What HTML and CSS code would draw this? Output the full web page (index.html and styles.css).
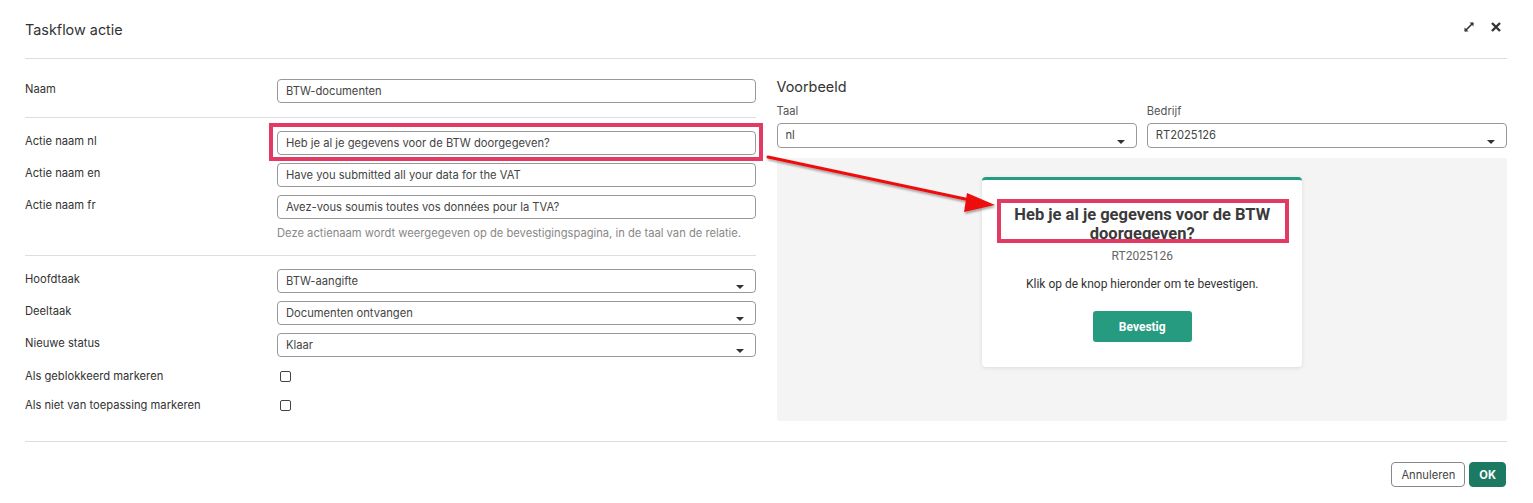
FILE: index.html
```html
<!DOCTYPE html>
<html lang="nl">
<head>
  <meta charset="UTF-8" />
  <meta name="viewport" content="width=device-width, initial-scale=1.0" />
  <title>Taskflow actie</title>
  <link rel="stylesheet" href="styles.css">
</head>
<body>
  <div class="modal">
    <header class="modal-header">
      <h1>Taskflow actie</h1>
      <div class="header-icons">
        <svg class="icon" width="12" height="12" viewBox="0 0 12 12">
          <path d="M2 10 L10 2" stroke="#333" stroke-width="1.6"/>
          <path d="M6.5 1.5 H10.5 V5.5 Z" fill="#333"/>
          <path d="M1.5 6.5 V10.5 H5.5 Z" fill="#333"/>
        </svg>
        <svg class="icon" width="12" height="12" viewBox="0 0 12 12">
          <path d="M2 2 L10 10 M10 2 L2 10" stroke="#333" stroke-width="2.4"/>
        </svg>
      </div>
    </header>

    <div class="modal-body">
      <div class="form-col">
        <div class="form-row">
          <label>Naam</label>
          <div class="input">BTW-documenten</div>
        </div>
        <hr class="sep">

        <div class="form-group">
          <div class="form-row">
            <label>Actie naam nl</label>
            <div class="input highlight">Heb je al je gegevens voor de BTW doorgegeven?</div>
          </div>
          <div class="form-row">
            <label>Actie naam en</label>
            <div class="input">Have you submitted all your data for the VAT</div>
          </div>
          <div class="form-row">
            <label>Actie naam fr</label>
            <div class="input">Avez-vous soumis toutes vos données pour la TVA?</div>
          </div>
        </div>
        <p class="hint">Deze actienaam wordt weergegeven op de bevestigingspagina, in de taal van de relatie.</p>
        <hr class="sep">

        <div class="form-group">
          <div class="form-row">
            <label>Hoofdtaak</label>
            <div class="input select"><span>BTW-aangifte</span><i class="caret"></i></div>
          </div>
          <div class="form-row">
            <label>Deeltaak</label>
            <div class="input select"><span>Documenten ontvangen</span><i class="caret"></i></div>
          </div>
          <div class="form-row">
            <label>Nieuwe status</label>
            <div class="input select"><span>Klaar</span><i class="caret"></i></div>
          </div>
          <div class="form-row check-row">
            <label>Als geblokkeerd markeren</label>
            <span class="checkbox"></span>
          </div>
          <div class="form-row check-row">
            <label>Als niet van toepassing markeren</label>
            <span class="checkbox"></span>
          </div>
        </div>
      </div>

      <div class="preview-col">
        <h2>Voorbeeld</h2>
        <div class="preview-filters">
          <div class="filter">
            <label>Taal</label>
            <div class="input select"><span>nl</span><i class="caret"></i></div>
          </div>
          <div class="filter">
            <label>Bedrijf</label>
            <div class="input select"><span>RT2025126</span><i class="caret"></i></div>
          </div>
        </div>
        <div class="preview-panel">
          <div class="confirm-card">
            <h3 class="card-title">Heb je al je gegevens voor de BTW doorgegeven?</h3>
            <div class="card-company">RT2025126</div>
            <p class="card-text">Klik op de knop hieronder om te bevestigen.</p>
            <button class="btn-confirm">Bevestig</button>
          </div>
        </div>
      </div>
    </div>

    <footer class="modal-footer">
      <button class="btn btn-outline">Annuleren</button>
      <button class="btn btn-primary">OK</button>
    </footer>

    <!-- annotation arrow -->
    <svg class="arrow" width="1533" height="503" viewBox="0 0 1533 503">
      <defs>
        <filter id="shadow" x="-10%" y="-50%" width="120%" height="200%">
          <feDropShadow dx="1" dy="2" stdDeviation="1.2" flood-color="#000" flood-opacity="0.35"/>
        </filter>
      </defs>
      <g filter="url(#shadow)">
        <path d="M768 157 L970 200" stroke="#ee1111" stroke-width="3" stroke-linecap="round"/>
        <path d="M995 205 L967 193 L964 212 Z" fill="#ee1111"/>
      </g>
    </svg>
  </div>
</body>
</html>
```

FILE: styles.css
```css
body {
  margin: 0;
  padding: 0;
  background-color: #fff;
  font-family: Inter, "Noto Sans", sans-serif;
  color: #333;
}
.modal {
  position: relative;
  width: 1533px;
  height: 503px;
  padding: 0 26px 0 25px;
  box-sizing: border-box;
}
.modal-header {
  height: 58px;
  border-bottom: 1px solid #ddd;
  display: flex;
  align-items: center;
  justify-content: space-between;
}
.modal-header h1 {
  margin: 0;
  font-size: 14.4px;
  font-weight: 400;
  color: #333;
}
.header-icons {
  display: flex;
  gap: 15px;
  align-items: center;
  margin-right: 5px;
  margin-top: -4px;
}
.modal-body {
  display: grid;
  grid-template-columns: 1fr 1fr;
  gap: 21px;
  padding: 20px 0 20px;
  border-bottom: 1px solid #ddd;
}
.form-group {
  display: flex;
  flex-direction: column;
  gap: 8px;
}
.form-row {
  display: grid;
  grid-template-columns: 252px 1fr;
  align-items: center;
}
.form-row label {
  font-size: 11.2px;
  color: #333;
  padding-bottom: 4px;
}
.input {
  height: 24px;
  box-sizing: border-box;
  border: 1px solid #999;
  border-radius: 4px;
  padding: 0 8px;
  font-size: 11.2px;
  color: #444;
  display: flex;
  align-items: center;
  white-space: nowrap;
}
.select {
  justify-content: space-between;
  align-items: flex-start;
  padding-top: 4px;
}
.caret {
  width: 0;
  height: 0;
  border-left: 4px solid transparent;
  border-right: 4px solid transparent;
  border-top: 4px solid #333;
  margin-top: 11px;
  margin-right: 3px;
}
.highlight {
  position: relative;
}
.highlight::after {
  content: "";
  position: absolute;
  top: -9px;
  bottom: -7px;
  left: -9px;
  right: -8px;
  border: 4px solid #e23a62;
}
.sep {
  border: none;
  border-top: 1px solid #ddd;
  margin: 14px 0 13px;
}
.hint {
  margin: 6px 0 14px 252px;
  font-size: 11.2px;
  line-height: 16px;
  color: #888;
}
.check-row {
  height: 21px;
}
.check-row:nth-child(4) {
  margin-top: 2px;
}
.checkbox {
  width: 9px;
  height: 9px;
  border: 1px solid #444;
  border-radius: 2px;
  margin-left: 3px;
  margin-bottom: 2px;
}
.preview-col h2 {
  margin: 0;
  font-size: 14.4px;
  line-height: 16px;
  font-weight: 400;
  color: #333;
}
.preview-filters {
  display: flex;
  gap: 10px;
  margin-top: 8px;
}
.filter {
  flex: 1;
  display: flex;
  flex-direction: column;
  gap: 4px;
}
.filter label {
  font-size: 11.2px;
  line-height: 16px;
  color: #555;
}
.filter .input {
  height: 25px;
}
.filter .caret {
  margin-top: 12px;
}
.preview-panel {
  margin-top: 10px;
  height: 263px;
  background-color: #f4f4f4;
  border-radius: 3px;
  display: flex;
  justify-content: center;
  align-items: flex-start;
  padding-top: 19px;
  box-sizing: border-box;
}
.confirm-card {
  width: 320px;
  height: 190px;
  box-sizing: border-box;
  margin-left: 1px;
  background-color: #fff;
  border-top: 3px solid #269b80;
  border-radius: 4px;
  box-shadow: 0 1px 4px rgba(0,0,0,0.1);
  padding: 25px 22px 0;
  text-align: center;
  font-family: Roboto, Arial, sans-serif;
}
.card-title {
  position: relative;
  margin: 0;
  font-size: 16.5px;
  line-height: 19px;
  font-weight: 700;
  color: #3a3a3a;
}
.card-title::after {
  content: "";
  position: absolute;
  top: -6px;
  bottom: 0;
  left: -7px;
  right: -9px;
  border: 4px solid #e23a62;
}
.card-company {
  margin-top: 5px;
  font-size: 12px;
  line-height: 16px;
  color: #666;
}
.card-text {
  margin: 12px 0 0;
  font-size: 12px;
  line-height: 16px;
  color: #333;
}
.btn-confirm {
  margin-top: 19px;
  width: 99px;
  height: 31px;
  border: none;
  border-radius: 3px;
  background-color: #269b80;
  color: #fff;
  font-family: Roboto, Arial, sans-serif;
  font-size: 12px;
  font-weight: 700;
}
.modal-footer {
  display: flex;
  justify-content: flex-end;
  gap: 4px;
  padding-top: 20px;
  padding-right: 1px;
}
.btn {
  height: 25px;
  border-radius: 4px;
  font-family: Inter, sans-serif;
  font-size: 11.2px;
  padding: 0 9px;
}
.btn-outline {
  background: #fff;
  border: 1px solid #888;
  color: #444;
}
.btn-primary {
  background-color: #1d7a62;
  border: 1px solid #1d7a62;
  color: #fff;
  font-weight: 700;
}
.arrow {
  position: absolute;
  top: 0;
  left: 0;
  pointer-events: none;
}
```
